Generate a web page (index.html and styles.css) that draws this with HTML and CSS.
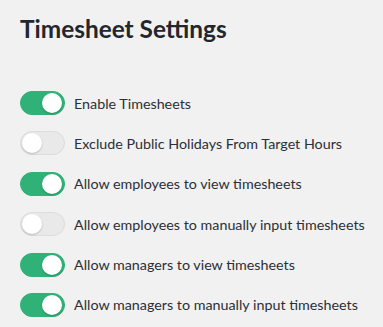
FILE: index.html
```html
<!DOCTYPE html>
<html>
<head>
<meta charset="utf-8">
<link rel="stylesheet" href="styles.css">
</head>
<body>
<div class="panel">
  <h1 class="title">Timesheet Settings</h1>
  <ul class="settings">
    <li class="row"><span class="toggle on"><span class="knob"></span></span><span class="label">Enable Timesheets</span></li>
    <li class="row"><span class="toggle"><span class="knob"></span></span><span class="label">Exclude Public Holidays From Target Hours</span></li>
    <li class="row"><span class="toggle on"><span class="knob"></span></span><span class="label">Allow employees to view timesheets</span></li>
    <li class="row"><span class="toggle"><span class="knob"></span></span><span class="label">Allow employees to manually input timesheets</span></li>
    <li class="row"><span class="toggle on"><span class="knob"></span></span><span class="label">Allow managers to view timesheets</span></li>
    <li class="row"><span class="toggle on"><span class="knob"></span></span><span class="label">Allow managers to manually input timesheets</span></li>
  </ul>
</div>
</body>
</html>
```
FILE: styles.css
```css
html, body {
  margin: 0;
  padding: 0;
  background: #f1f1f1;
}
body {
  font-family: "Lato", "Open Sans", sans-serif;
  color: #2b2f36;
}
.panel {
  padding: 14px 0 0 20px;
}
.title {
  margin: 0;
  font-size: 24.4px;
  font-weight: 700;
  color: #22272e;
  line-height: 30px;
}
.settings {
  list-style: none;
  margin: 47px 0 0 0;
  padding: 0;
  display: flex;
  flex-direction: column;
  gap: 16.4px;
}
.row {
  display: flex;
  align-items: center;
  gap: 9px;
  height: 24px;
}
.toggle {
  box-sizing: border-box;
  width: 45px;
  height: 24px;
  border-radius: 12px;
  background: #e9e9e9;
  border: 1px solid #dcdcdc;
  position: relative;
  flex: none;
  display: flex;
  align-items: center;
  padding: 0 1px;
}
.toggle.on {
  background: #2fb177;
  border-color: #2fb177;
  justify-content: flex-end;
  padding: 0 2px;
}
.knob {
  width: 20px;
  height: 20px;
  border-radius: 50%;
  background: #fff;
  box-shadow: 0 1px 2px rgba(0,0,0,0.2);
}
.label {
  font-size: 14.3px;
  color: #2b2f36;
}
```
